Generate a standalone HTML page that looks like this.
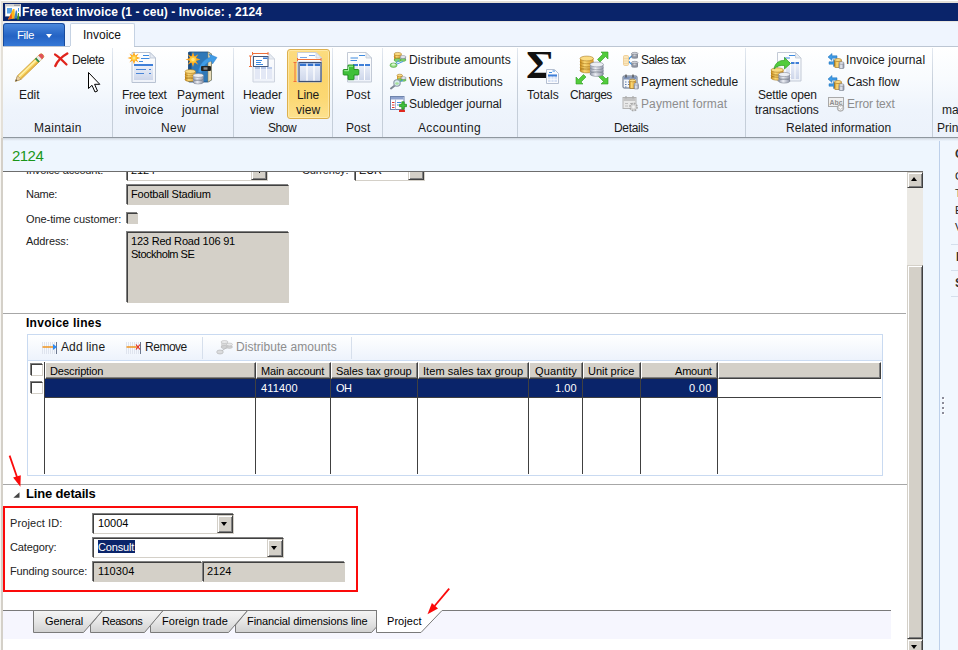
<!DOCTYPE html>
<html><head><meta charset="utf-8"><title>Free text invoice</title>
<style>
*{box-sizing:border-box;margin:0;padding:0}
html,body{width:958px;height:650px;overflow:hidden;background:#fff}
body{position:relative;font-family:"Liberation Sans",sans-serif;font-size:11px;color:#000}
.abs{position:absolute}
.t{position:absolute;white-space:nowrap;line-height:14px}
.rb{font-size:12px;color:#111;letter-spacing:0}
.ctr{text-align:center}
.fm{font-size:11px;letter-spacing:-0.15px;color:#222}
.sunk{position:absolute;background:#d4d0c8;border:1px solid;border-color:#404040 #d4d0c8 #d4d0c8 #404040;box-shadow:-1px -1px 0 #808080}
.gl{width:1px;background:#404040}
.cb{width:13px;height:13px;background:#fff;border:1px solid;border-color:#404040 #d4d0c8 #d4d0c8 #404040;box-shadow:-1px -1px 0 #808080}
.ddb{width:16px;height:18px;background:#d4d0c8;border:1px solid;border-color:#d4d0c8 #404040 #404040 #d4d0c8;box-shadow:inset 1px 1px 0 #fff,inset -1px -1px 0 #808080}
.ddb:after{content:"";position:absolute;left:3px;top:6px;border:3.500px solid transparent;border-bottom:0;border-top:4px solid #000}
.rais{background:#d4d0c8;border:1px solid;border-color:#d4d0c8 #404040 #404040 #d4d0c8;box-shadow:inset 1px 1px 0 #fff,inset -1px -1px 0 #808080}
.hc{height:17px;background:#d4d0c8;border:1px solid;border-color:#fff #404040 #404040 #fff;box-shadow:inset -1px -1px 0 #808080}
.sep{position:absolute;top:48px;height:89px;width:1px;background:linear-gradient(#e3e9f1,#c5ced9 40%)}
</style></head><body>
<!-- window frame -->
<div class="abs" style="left:0;top:0;width:958px;height:650px;background:#e4e0d8"></div>
<div class="abs" style="left:0;top:0;width:958px;height:1px;background:#fff"></div>
<!-- title bar -->
<div class="abs" style="left:3px;top:3px;width:955px;height:18px;background:#0a246a"></div>
<svg class="abs" style="left:4px;top:3px" width="18" height="18" viewBox="4 3 18 18"><rect x="5" y="4" width="16" height="12.500" fill="#cfcfcf"/><rect x="6" y="6.500" width="14" height="9.500" fill="#fff"/><path d="M14.500 5.200 h1 M16.500 5.200 h1 M18.500 5.200 h1" stroke="#555" stroke-width="1"/><rect x="7" y="8" width="5" height="5.500" fill="#5aa4e6"/><rect x="18" y="8" width="1" height="3.500" fill="#4a90e2"/><path d="M8 19.500 L13 9 L14.500 9 L15 18.500 Z" fill="#f9b91a"/><path d="M8 19.500 L11.500 13 L12 18.500 Z" fill="#f0541a"/><path d="M14.200 18.500 L15.800 10.500 L17 10.500 L17.500 18.500 Z" fill="#3a80c4"/><path d="M17 19.500 L18 13 L19 13 L19.200 19.500 Z" fill="#4a9a1a"/></svg>
<div class="t" id="title" style="left:22px;top:5px;font-weight:bold;font-size:12px;color:#fff;line-height:15px;letter-spacing:.07px">Free text invoice (1 - ceu) - Invoice: , 2124</div>
<!-- tab row -->
<div class="abs" style="left:3px;top:21px;width:955px;height:26px;background:#eff5fe;border-top:1px solid #e9e6df"></div>
<div class="abs" style="left:3px;top:23px;width:62px;height:23px;background:linear-gradient(#4a88dc,#2a69c8 45%,#2563c4 55%,#3578d6);border:1px solid #174a9c;border-bottom:none;border-radius:3px 3px 0 0"></div>
<div class="t" style="left:17px;top:28px;font-size:11.500px;letter-spacing:-.4px;color:#fff">File</div>
<div class="abs" style="left:46px;top:34px;width:0;height:0;border-left:3.500px solid transparent;border-right:3.500px solid transparent;border-top:4px solid #fff"></div>
<div class="abs" style="left:70px;top:23px;width:65px;height:24px;background:#fff;border:1px solid #c5d2e3;border-bottom:none;border-radius:2px 2px 0 0"></div>
<div class="t" style="left:83px;top:28px;font-size:12px;color:#111">Invoice</div>
<!-- ribbon -->
<div class="abs" style="left:3px;top:46px;width:955px;height:92px;background:linear-gradient(#ffffff 0%,#f8fbfe 35%,#eef4fc 70%,#ecf2fb 100%);border-top:1px solid #bcc6d3;border-bottom:1px solid #8f979f"></div>
<div class="abs" style="left:70px;top:46px;width:64px;height:1px;background:#fff"></div>
<div id="ribbon">
<div class="sep" style="left:112px"></div><div class="sep" style="left:233px"></div><div class="sep" style="left:332px"></div><div class="sep" style="left:382px"></div><div class="sep" style="left:517px"></div><div class="sep" style="left:745px"></div><div class="sep" style="left:932px"></div>
<div class="abs" style="left:287px;top:49px;width:43px;height:70px;border:1px solid #ddb04e;border-radius:3px;background:linear-gradient(#fcdc80 0%,#fbd56c 40%,#fcd873 70%,#fde18e 100%);box-shadow:inset 0 0 0 1px rgba(255,240,190,.6)"></div>
<svg class="abs" style="left:0;top:46px;z-index:1" width="958" height="92" viewBox="0 46 958 92" id="ricons">
<defs>
<linearGradient id="gold" x1="0" x2="1"><stop offset="0" stop-color="#c98a1a"/><stop offset=".35" stop-color="#fbd976"/><stop offset="1" stop-color="#d6962a"/></linearGradient>
<linearGradient id="silv" x1="0" x2="1"><stop offset="0" stop-color="#8f96a8"/><stop offset=".4" stop-color="#eceef4"/><stop offset="1" stop-color="#8d93a6"/></linearGradient>
<linearGradient id="docg" x1="0" y1="0" x2="0" y2="1"><stop offset="0" stop-color="#ffffff"/><stop offset="1" stop-color="#eef2f9"/></linearGradient>
<linearGradient id="tblg" x1="0" y1="0" x2="0" y2="1"><stop offset="0" stop-color="#eef2fb"/><stop offset="1" stop-color="#cdd6ea"/></linearGradient>
<g id="star"><path d="M0 -6.500 L1.300 -2.600 L4.600 -4.600 L2.600 -1.300 L6.500 0 L2.600 1.300 L4.600 4.600 L1.300 2.600 L0 6.500 L-1.300 2.600 L-4.600 4.600 L-2.600 1.300 L-6.500 0 L-2.600 -1.300 L-4.600 -4.600 L-1.300 -2.600 Z" fill="#ffa51a"/><circle r="2.800" fill="#ffc93a"/><circle r="1.500" fill="#ffe680"/></g>
<g id="swap"><path d="M0 3.500 L4 0 V2.300 H9 V4.700 H4 V7 Z" fill="#3f9be6" stroke="#1f6fb5" stroke-width=".5"/><path d="M9.500 9.500 L5.500 6 V8.300 H1 V10.700 H5.500 V13 Z" fill="#3f9be6" stroke="#1f6fb5" stroke-width=".5"/><rect x="6.500" y="6.500" width="7" height="7.500" rx="1" fill="url(#gold)" stroke="#9a6a14" stroke-width=".6"/><ellipse cx="10" cy="6.500" rx="3.500" ry="1.500" fill="#fbdc84" stroke="#9a6a14" stroke-width=".6"/><rect x="11" y="9.500" width="5" height="5.500" rx="1" fill="url(#silv)" stroke="#6f7785" stroke-width=".6"/><ellipse cx="13.500" cy="9.500" rx="2.500" ry="1.200" fill="#eceef4" stroke="#6f7785" stroke-width=".6"/></g>
</defs>
<!-- pencil -->
<g transform="translate(15.400 81.300) rotate(-44)"><path d="M0 0 L5.500 -2.500 H36 Q38.300 -2.500 38.300 0 Q38.300 2.500 36 2.500 H5.500 Z" fill="#f9da6c" stroke="#c9962e" stroke-width=".8"/><path d="M5.500 -0.800 H30" stroke="#fff3b5" stroke-width="1.300"/><path d="M5.500 1.600 H30" stroke="#e4b040" stroke-width="1"/><path d="M0 0 L5.500 -2.500 V2.500 Z" fill="#ecd2a2" stroke="#a38a5e" stroke-width=".5"/><path d="M0 0 L2 -0.900 V0.900 Z" fill="#444"/><rect x="29.500" y="-2.500" width="2" height="5" fill="#2e8f4e"/><rect x="31.500" y="-2.500" width="3" height="5" fill="#e8e8ea"/><path d="M34.500 -2.500 H36 Q38.300 -2.500 38.300 0 Q38.300 2.500 36 2.500 H34.500 Z" fill="#e0525a"/></g>
<!-- delete X -->
<path d="M55 54.500 C58 56 62 60 66.500 64.500" stroke="#e0241c" stroke-width="2.200" fill="none" stroke-linecap="round"/><path d="M67.300 53.500 C62 56.500 57.500 60.500 55.300 66" stroke="#e0241c" stroke-width="2.400" fill="none" stroke-linecap="round"/>
<!-- cursor -->
<path d="M88.500 72.500 V88.500 L92 85.300 L95 92 L97.500 91 L94.600 84.300 H99.800 Z" fill="#fff" stroke="#000" stroke-width="1" stroke-linejoin="miter"/>
<!-- free text invoice -->
<path d="M132 52.500 H150 L155.500 58 V82.500 H132 Z" fill="url(#docg)" stroke="#b9c3d3" stroke-width="1"/><path d="M150 52.500 V58 H155.500 Z" fill="#e6ebf3" stroke="#b9c3d3" stroke-width=".8"/>
<path d="M143 55.500 H149 M141 58.500 H149.500 M139 61.500 H143" stroke="#3f8be0" stroke-width="1.200"/>
<rect x="134" y="64" width="19" height="16" fill="url(#tblg)"/><rect x="134" y="64" width="19" height="2" fill="#3f7fd8"/><path d="M136 69.500 H146 M149 69.500 H151 M136 73.500 H144 M149 73.500 H151" stroke="#4a86d8" stroke-width="1"/>
<use href="#star" x="134" y="58"/>
<!-- payment journal -->
<path d="M188.500 53 Q188.500 52 189.500 52 H208 L211.500 54 V80 L208 82 H189.500 Q188.500 82 188.500 81 Z" fill="#2f78b8" stroke="#1c4f80" stroke-width=".8"/><path d="M208 52 L211.500 54 V80 L208 82 Z" fill="#e8dcb8" stroke="#8a7a4a" stroke-width=".5"/><rect x="188.500" y="52" width="3" height="30" fill="#1d4f82"/>
<path d="M198 72 C200 62 206 58 210.500 57.500 L209 54 L217 57.500 L212.500 64 L211.500 61 C207 62 203 66 201.500 73 Z" fill="#3f9be6" stroke="#2a7ac8" stroke-width=".5"/>
<rect x="201" y="66" width="10" height="5" rx="1" fill="#222"/><rect x="203.500" y="67.300" width="4" height="2.400" fill="#888"/>
<g><rect x="185" y="71.500" width="10.500" height="8" fill="url(#gold)"/><ellipse cx="190.250" cy="79.500" rx="5.250" ry="2" fill="url(#gold)" stroke="#9a6a14" stroke-width=".5"/><path d="M185 74c0 2.500 10.500 2.500 10.500 0M185 76.700c0 2.500 10.500 2.500 10.500 0" stroke="#9a6a14" stroke-width=".5" fill="none"/><ellipse cx="190.250" cy="71.500" rx="5.250" ry="2" fill="#fbdc84" stroke="#9a6a14" stroke-width=".5"/></g>
<g><rect x="193" y="75.500" width="10.500" height="6.500" fill="url(#silv)"/><ellipse cx="198.250" cy="82" rx="5.250" ry="2" fill="url(#silv)" stroke="#6f7785" stroke-width=".5"/><path d="M193 78.500c0 2.500 10.500 2.500 10.500 0" stroke="#6f7785" stroke-width=".5" fill="none"/><ellipse cx="198.250" cy="75.500" rx="5.250" ry="2" fill="#eceef4" stroke="#6f7785" stroke-width=".5"/></g>
<g transform="translate(193 59.500) scale(1.150)"><use href="#star"/></g>
<!-- header view -->
<path d="M253 53.500 H269 L274.500 59 V82 H253 Z" fill="url(#docg)" stroke="#cdd3de" stroke-width="1"/><path d="M269 53.500 V59 H274.500 Z" fill="#e9edf4" stroke="#cdd3de" stroke-width=".8"/>
<rect x="255" y="67" width="17" height="12" fill="#e3e8f5"/><rect x="255" y="67" width="17" height="2" fill="#b7c9ea"/><path d="M260.500 67 V79 M266.500 67 V79" stroke="#fff" stroke-width="1"/>
<rect x="253.500" y="56.500" width="14.500" height="10" fill="#fff" stroke="#44597c" stroke-width="1"/><rect x="263" y="57.500" width="4.500" height="1.500" fill="#3f7fd8"/><path d="M256 60.500 H262 M256 62.500 H261 M256 64.500 H263" stroke="#3f8be0" stroke-width="1"/>
<path d="M252.500 53.500 H268 M252.500 52 V55 M268 52 V55 M250.500 56 V66.500 M249 56 H252 M249 66.500 H252" stroke="#f0703a" stroke-width="1" fill="none"/>
<!-- line view -->
<path d="M297.500 52.500 H316 L321.500 58 V82 H297.500 Z" fill="url(#docg)" stroke="#c9ced8" stroke-width="1"/><path d="M316 52.500 V58 H321.500 Z" fill="#e9edf4" stroke="#c9ced8" stroke-width=".8"/>
<path d="M309 55.500 H315 M300 57.500 H307" stroke="#7aa7e6" stroke-width="1"/>
<rect x="299" y="62.500" width="22" height="19" fill="url(#tblg)" stroke="#3c4f74" stroke-width="1.200"/><rect x="300" y="63.500" width="20" height="2.500" fill="#3473d0"/><path d="M307 63.500 V80.500 M314 63.500 V80.500" stroke="#fff" stroke-width="1.300"/>
<path d="M297.500 59.500 H321 M297.500 58 V61 M321 58 V61 M295 62.500 V81.500 M293.500 62.500 H296.500 M293.500 81.500 H296.500" stroke="#f0703a" stroke-width="1" fill="none"/>
<!-- post -->
<path d="M347.500 52.500 H366 L371.500 58 V82 H347.500 Z" fill="url(#docg)" stroke="#c3cad6" stroke-width="1"/><path d="M366 52.500 V58 H371.500 Z" fill="#e6ebf3" stroke="#c3cad6" stroke-width=".8"/>
<path d="M359 55.500 H365 M350.500 58 H358 M350.500 60.500 H357" stroke="#3f8be0" stroke-width="1.200"/>
<rect x="353" y="64" width="17" height="16" fill="url(#tblg)"/><rect x="353" y="64" width="17" height="2" fill="#3f7fd8"/><path d="M358.500 64 V80 M364.500 64 V80" stroke="#fff" stroke-width="1"/>
<path d="M348.500 65 H353.500 Q354 65 354 65.500 V69.500 H358 Q358.800 69.500 358.800 70.200 V74.300 Q358.800 75 358 75 H354 V79 Q354 79.700 353.500 79.700 H348.500 Q348 79.700 348 79 V75 H344 Q343.200 75 343.200 74.300 V70.200 Q343.200 69.500 344 69.500 H348 V65.500 Q348 65 348.500 65 Z" fill="#3fc03a" stroke="#1d8a1a" stroke-width=".9"/><path d="M349 66.200 H353 M344.300 70.700 H348.500 V66.500" stroke="#a5eea0" stroke-width="1" fill="none"/>
<!-- distribute amounts -->
<g id="dist"><rect x="394" y="54" width="7.500" height="6" fill="url(#gold)"/><ellipse cx="397.750" cy="60" rx="3.750" ry="1.600" fill="#7fd070" stroke="#3a9a2a" stroke-width=".5"/><path d="M394 56.500c0 2 7.500 2 7.500 0" stroke="#9a6a14" stroke-width=".5" fill="none"/><ellipse cx="397.750" cy="54" rx="3.750" ry="1.600" fill="#fbdc84" stroke="#9a6a14" stroke-width=".5"/>
<rect x="400" y="57" width="6" height="3" fill="url(#silv)"/><ellipse cx="403" cy="60" rx="3" ry="1.400" fill="#7fd070" stroke="#3a9a2a" stroke-width=".5"/><ellipse cx="403" cy="57" rx="3" ry="1.400" fill="#eceef4" stroke="#6f7785" stroke-width=".5"/>
<path d="M393.500 65 L399 60.500 M393.500 65.500 L403 61.500" stroke="#4a9ae6" stroke-width="1"/><ellipse cx="393.500" cy="65.200" rx="3.500" ry="2.200" fill="#9be08a" stroke="#3a9a2a" stroke-width=".6"/><ellipse cx="393.500" cy="64.600" rx="2" ry="1" fill="#dff5d8"/></g>
<!-- view distributions -->
<rect x="397" y="75.500" width="5.500" height="4.500" fill="url(#gold)"/><ellipse cx="399.750" cy="80" rx="2.750" ry="1.300" fill="#7fd070" stroke="#3a9a2a" stroke-width=".5"/><ellipse cx="399.750" cy="75.500" rx="2.750" ry="1.300" fill="#fbdc84" stroke="#9a6a14" stroke-width=".5"/>
<ellipse cx="403.500" cy="80" rx="2.600" ry="1.300" fill="#7fd070" stroke="#3a9a2a" stroke-width=".5"/><ellipse cx="403.500" cy="78" rx="2.600" ry="1.300" fill="#eceef4" stroke="#6f7785" stroke-width=".5"/>
<path d="M399 82 L403 80.500" stroke="#4a9ae6" stroke-width="1"/>
<path d="M394.800 85.500 L391 88.500" stroke="#7d8794" stroke-width="2" stroke-linecap="round"/><circle cx="397" cy="83" r="3.200" fill="#d5ecf2" stroke="#8e98a6" stroke-width="1.100"/><ellipse cx="397" cy="83.500" rx="1.800" ry="1.200" fill="#a8e09a"/>
<!-- subledger journal -->
<rect x="390.500" y="96.500" width="13.500" height="13" fill="#fff" stroke="#6f84ac" stroke-width="1"/><rect x="391" y="97" width="12.500" height="2.500" fill="#8fa3cf"/><path d="M395.500 99.500 V109.500" stroke="#aab9d8" stroke-width="1"/><path d="M392 102.500 H394.500 M392 105 H394.500 M392 107.500 H394.500" stroke="#e0382e" stroke-width="1"/><path d="M397 102.500 H401 M397 105 H399" stroke="#3f8be0" stroke-width="1"/>
<path d="M401.800 101.800 H404.200 V104.300 H406.500 V106.700 H404.200 V109.200 H401.800 V106.700 H399.500 V104.300 H401.800 Z" fill="#3fc03a" stroke="#1d8a1a" stroke-width=".7"/>
<rect x="399" y="109.700" width="6" height="2.200" rx=".5" fill="#e0281e"/>
<!-- totals small doc -->
<path d="M546.500 69.500 H554.500 L558.500 73.500 V83.500 H546.500 Z" fill="#fbfcfe" stroke="#b5bfd0" stroke-width="1"/><rect x="548" y="74.500" width="9" height="7.500" fill="#d5e0f4"/><rect x="548" y="74.500" width="9" height="2" fill="#3f7fd8"/><path d="M551 76.500 V82 M554 76.500 V82 M548 79.300 H557" stroke="#fff" stroke-width=".8"/><path d="M549 72.500 H552 M552.500 71 H555" stroke="#3f8be0" stroke-width="1"/>
<!-- charges -->
<g fill="#52cc3c" stroke="#2f9a22" stroke-width=".6"><path d="M608 52 V59 L605.500 56.500 L600 62 L597.500 59.500 L603 54 L601 52 Z"/><path d="M576 84 V77 L578.500 79.500 L583.500 74.500 L586 77 L581 82 L583 84 Z"/><path d="M608 84 H601 L603.500 81.500 L598.500 76.500 L601 74 L606 79 L608 77 Z"/></g>
<g><rect x="580" y="58.500" width="13.500" height="12" fill="url(#gold)"/><ellipse cx="586.750" cy="70.500" rx="6.750" ry="2.400" fill="url(#gold)" stroke="#9a6a14" stroke-width=".5"/><path d="M580 61.500c0 3 13.500 3 13.500 0M580 64.500c0 3 13.500 3 13.500 0M580 67.500c0 3 13.500 3 13.500 0" stroke="#9a6a14" stroke-width=".5" fill="none"/><ellipse cx="586.750" cy="58.500" rx="6.750" ry="2.400" fill="#fbdc84" stroke="#9a6a14" stroke-width=".5"/></g>
<g><rect x="590" y="64.500" width="13.500" height="9.500" fill="url(#silv)"/><ellipse cx="596.750" cy="74" rx="6.750" ry="2.400" fill="url(#silv)" stroke="#6f7785" stroke-width=".5"/><path d="M590 67.500c0 3 13.500 3 13.500 0M590 70.500c0 3 13.500 3 13.500 0" stroke="#6f7785" stroke-width=".5" fill="none"/><ellipse cx="596.750" cy="64.500" rx="6.750" ry="2.400" fill="#eceef4" stroke="#6f7785" stroke-width=".5"/></g>
<!-- sales tax -->
<path d="M628.500 59 L632 55.800 M628.500 61.500 L632 64.700" stroke="#2f8fe8" stroke-width="1.100" fill="none"/><circle cx="629" cy="58.700" r=".9" fill="#2f8fe8"/><circle cx="629" cy="61.800" r=".9" fill="#2f8fe8"/>
<rect x="623.500" y="55.500" width="5" height="10" rx="1.200" fill="#fae6bc" stroke="#ecc88a" stroke-width=".8"/><path d="M623.500 58.500h5M623.500 61h5M623.500 63.500h5" stroke="#ecc88a" stroke-width=".5"/>
<linearGradient id="dsil" x1="0" x2="1"><stop offset="0" stop-color="#6d727e"/><stop offset=".45" stop-color="#d9dce2"/><stop offset="1" stop-color="#777c88"/></linearGradient>
<rect x="631.500" y="53.500" width="6.500" height="4" fill="url(#dsil)"/><ellipse cx="634.750" cy="57.500" rx="3.250" ry="1.200" fill="#8d929e"/><ellipse cx="634.750" cy="53.500" rx="3.250" ry="1.200" fill="#c9ccd4" stroke="#70757f" stroke-width=".5"/>
<rect x="631.500" y="62.500" width="6.500" height="4" fill="url(#dsil)"/><ellipse cx="634.750" cy="66.500" rx="3.250" ry="1.200" fill="#8d929e"/><ellipse cx="634.750" cy="62.500" rx="3.250" ry="1.200" fill="#c9ccd4" stroke="#70757f" stroke-width=".5"/>
<!-- payment schedule -->
<rect x="623" y="76" width="14" height="12" rx="1" fill="#f4f6fa" stroke="#5f6b80" stroke-width="1"/><rect x="623.500" y="76.500" width="13" height="3" fill="#7f93b8"/><path d="M626 74.500 V77.500 M633 74.500 V77.500" stroke="#444" stroke-width="1.200"/><path d="M625 82 h1.500 M628 82 h1.500 M625 84.500 h1.500 M628 84.500 h1.500 M625 87 h1.500" stroke="#5f7fb0" stroke-width="1.200"/>
<path d="M628 79 L631 76.500 V78 H634 V80 H631 V81.500 Z" fill="#9aa3b5"/>
<rect x="629.500" y="80.500" width="6" height="8" rx="1" fill="url(#gold)" stroke="#9a6a14" stroke-width=".6"/><ellipse cx="632.500" cy="80.500" rx="3" ry="1.300" fill="#fbdc84" stroke="#9a6a14" stroke-width=".5"/>
<rect x="634" y="84" width="4.500" height="5" rx="1" fill="url(#silv)" stroke="#6f7785" stroke-width=".5"/><ellipse cx="636.250" cy="84" rx="2.250" ry="1" fill="#eceef4" stroke="#6f7785" stroke-width=".5"/>
<!-- payment format (disabled) -->
<rect x="623" y="97.500" width="13" height="11" fill="#e9e9e9" stroke="#b3b3b3" stroke-width="1"/><rect x="623.500" y="98" width="12" height="3" fill="#c4c4c4"/><path d="M625 103.500 h3 M630 103.500 h3 M625 106 h3" stroke="#bdbdbd" stroke-width="1.200"/><path d="M626 96 V98.500 M633 96 V98.500" stroke="#aaa" stroke-width="1.200"/>
<circle cx="633.500" cy="107" r="3.600" fill="#d6d6d6" stroke="#a8a8a8" stroke-width="1.600" stroke-dasharray="1.700 1.100"/><circle cx="633.500" cy="107" r="1.400" fill="#f4f4f4"/>
<!-- settle open transactions -->
<path d="M777.500 52.500 H795.500 L801 58 V81 H777.500 Z" fill="url(#docg)" stroke="#c3cad6" stroke-width="1"/><path d="M795.500 52.500 V58 H801 Z" fill="#e6ebf3" stroke="#c3cad6" stroke-width=".8"/>
<path d="M789 55.500 H795 M784 58 H790" stroke="#3f8be0" stroke-width="1.200"/>
<rect x="786" y="62" width="13" height="17" fill="url(#tblg)"/><rect x="786" y="62" width="13" height="2" fill="#3f7fd8"/><path d="M790.500 62 V79 M795 62 V79" stroke="#fff" stroke-width="1"/>
<g><rect x="771" y="70" width="12.500" height="8" fill="url(#gold)"/><ellipse cx="777.250" cy="78" rx="6.250" ry="2.200" fill="url(#gold)" stroke="#9a6a14" stroke-width=".5"/><path d="M771 72.700c0 2.800 12.500 2.800 12.500 0M771 75.300c0 2.800 12.500 2.800 12.500 0" stroke="#9a6a14" stroke-width=".5" fill="none"/><ellipse cx="777.250" cy="70" rx="6.250" ry="2.200" fill="#fbdc84" stroke="#9a6a14" stroke-width=".5"/></g>
<g><rect x="778.500" y="74.500" width="11.500" height="6.500" fill="url(#silv)"/><ellipse cx="784.250" cy="81" rx="5.750" ry="2.100" fill="url(#silv)" stroke="#6f7785" stroke-width=".5"/><path d="M778.500 77.500c0 2.600 11.500 2.600 11.500 0" stroke="#6f7785" stroke-width=".5" fill="none"/><ellipse cx="784.250" cy="74.500" rx="5.750" ry="2.100" fill="#eceef4" stroke="#6f7785" stroke-width=".5"/></g>
<path d="M774 69 C775 62.500 780 60 784.500 60.500 L784.500 57.500 L790.500 63.500 L784.500 69 L784.500 65.500 C780.500 65 777 66 774 69 Z" fill="#52cc3c" stroke="#2f9a22" stroke-width=".7"/>
<!-- invoice journal / cash flow -->
<use href="#swap" x="828" y="53.500"/><use href="#swap" x="828" y="75.500"/>
<!-- error text -->
<rect x="828.500" y="97.500" width="15" height="9" fill="#f0f0f0" stroke="#a9a9a9" stroke-width="1"/><text x="829.500" y="105" font-family="Liberation Sans, sans-serif" font-size="7.500" font-weight="bold" fill="#8f8f8f" textLength="13" lengthAdjust="spacingAndGlyphs">Abc</text><circle cx="840.500" cy="108" r="3.300" fill="#cdcdcd" stroke="#9a9a9a" stroke-width=".7"/><path d="M839 106.500 L842 109.500 M842 106.500 L839 109.500" stroke="#fff" stroke-width="1.100"/>
</svg>
<div class="t" id="sigma" style="left:526px;top:43px;font-family:'Liberation Serif',serif;font-weight:bold;font-size:40px;line-height:44px;color:#111;transform:scaleX(1.1);transform-origin:0 0">Σ</div>
<!-- RTEXT -->
<div class="t" style="left:19px;top:88px;font-size:12px;color:#1a1a1a;letter-spacing:-0.06px;">Edit</div>
<div class="t" style="left:72px;top:53px;font-size:12px;color:#1a1a1a;letter-spacing:-0.42px;">Delete</div>
<div class="t" style="left:34px;top:121px;font-size:12px;color:#1a1a1a;letter-spacing:0.28px;">Maintain</div>
<div class="t" style="left:122px;top:88px;font-size:12px;color:#1a1a1a;letter-spacing:-0.32px;">Free text</div>
<div class="t" style="left:125px;top:103px;font-size:12px;color:#1a1a1a;letter-spacing:0.16px;">invoice</div>
<div class="t" style="left:177px;top:88px;font-size:12px;color:#1a1a1a;">Payment</div>
<div class="t" style="left:182px;top:103px;font-size:12px;color:#1a1a1a;letter-spacing:0.13px;">journal</div>
<div class="t" style="left:161px;top:121px;font-size:12px;color:#1a1a1a;letter-spacing:0.39px;">New</div>
<div class="t" style="left:243px;top:88px;font-size:12px;color:#1a1a1a;letter-spacing:-0.07px;">Header</div>
<div class="t" style="left:250px;top:103px;font-size:12px;color:#1a1a1a;letter-spacing:0.09px;">view</div>
<div class="t" style="left:297px;top:88px;font-size:12px;color:#1a1a1a;letter-spacing:-0.13px;">Line</div>
<div class="t" style="left:296px;top:103px;font-size:12px;color:#1a1a1a;letter-spacing:0.09px;">view</div>
<div class="t" style="left:268px;top:121px;font-size:12px;color:#1a1a1a;letter-spacing:-0.48px;">Show</div>
<div class="t" style="left:346px;top:88px;font-size:12px;color:#1a1a1a;letter-spacing:0.09px;">Post</div>
<div class="t" style="left:346px;top:121px;font-size:12px;color:#1a1a1a;letter-spacing:0.09px;">Post</div>
<div class="t" style="left:409px;top:53px;font-size:12px;color:#1a1a1a;letter-spacing:0.10px;">Distribute amounts</div>
<div class="t" style="left:409px;top:75px;font-size:12px;color:#1a1a1a;letter-spacing:0.04px;">View distributions</div>
<div class="t" style="left:409px;top:97px;font-size:12px;color:#1a1a1a;letter-spacing:-0.08px;">Subledger journal</div>
<div class="t" style="left:418px;top:121px;font-size:12px;color:#1a1a1a;letter-spacing:0.36px;">Accounting</div>
<div class="t" style="left:527px;top:88px;font-size:12px;color:#1a1a1a;letter-spacing:0.09px;">Totals</div>
<div class="t" style="left:570px;top:88px;font-size:12px;color:#1a1a1a;letter-spacing:-0.51px;">Charges</div>
<div class="t" style="left:641px;top:53px;font-size:12px;color:#1a1a1a;letter-spacing:-0.54px;">Sales tax</div>
<div class="t" style="left:641px;top:75px;font-size:12px;color:#1a1a1a;letter-spacing:-0.11px;">Payment schedule</div>
<div class="t" style="left:641px;top:97px;font-size:12px;color:#8d8d8d;letter-spacing:0.10px;">Payment format</div>
<div class="t" style="left:614px;top:121px;font-size:12px;color:#1a1a1a;letter-spacing:-0.31px;">Details</div>
<div class="t" style="left:758px;top:88px;font-size:12px;color:#1a1a1a;letter-spacing:-0.19px;">Settle open</div>
<div class="t" style="left:755px;top:103px;font-size:12px;color:#1a1a1a;letter-spacing:-0.08px;">transactions</div>
<div class="t" style="left:846px;top:53px;font-size:12px;color:#1a1a1a;letter-spacing:0.12px;">Invoice journal</div>
<div class="t" style="left:847px;top:75px;font-size:12px;color:#1a1a1a;">Cash flow</div>
<div class="t" style="left:847px;top:97px;font-size:12px;color:#8d8d8d;letter-spacing:-0.18px;">Error text</div>
<div class="t" style="left:786px;top:121px;font-size:12px;color:#1a1a1a;letter-spacing:0.06px;">Related information</div>
<div class="t" style="left:942px;top:103px;font-size:12px;color:#1a1a1a;">ma</div>
<div class="t" style="left:937px;top:121px;font-size:12px;color:#1a1a1a;">Prin</div>
<!-- /RTEXT -->
<!-- Maintain -->
<!-- cursor -->
<!-- New -->
<!-- Show -->
<!-- Post -->
<!-- Accounting -->
<!-- Details -->
<!-- Related information -->
</div>

<!-- caption -->
<div class="abs" style="left:3px;top:138px;width:955px;height:33px;background:#eef6fe"></div>
<div class="t" id="cap" style="left:12px;top:147px;font-size:15px;color:#1a961a;line-height:18px;letter-spacing:-.55px">2124</div>
<div id="form">
<!-- white form area -->
<div class="abs" style="left:3px;top:171px;width:920px;height:479px;background:#fff;border-top:1px solid #6d6d6d"></div>
<!-- right strip + panel -->
<div class="abs" style="left:923px;top:138px;width:35px;height:512px;background:#eef6fe"></div>
<div class="abs" style="left:939px;top:138px;width:1px;height:512px;background:#bdd0ea"></div>
<div class="abs" style="left:940px;top:138px;width:18px;height:512px;background:#f1f7fe"></div>
<div class="abs" style="left:951px;top:244px;width:7px;height:1px;background:#d5dfec"></div>
<div class="abs" style="left:951px;top:270px;width:7px;height:1px;background:#d5dfec"></div>
<div class="abs" style="left:951px;top:296px;width:7px;height:1px;background:#d5dfec"></div>
<div class="t" style="left:955px;top:147px;font-weight:bold;font-size:12px;color:#333">C</div>
<div class="t fm" style="left:955px;top:169px">C</div>
<div class="t fm" style="left:955px;top:186px">T</div>
<div class="t fm" style="left:955px;top:203px">E</div>
<div class="t fm" style="left:955px;top:220px">V</div>
<div class="t" style="left:956px;top:250px;font-weight:bold;font-size:12px;color:#333">I</div>
<div class="t" style="left:955px;top:276px;font-weight:bold;font-size:12px;color:#333">S</div>
<div class="abs" style="left:942px;top:397px;width:2px;height:2px;background:#8b8b99;box-shadow:1px 1px 0 #fff"></div><div class="abs" style="left:942px;top:402px;width:2px;height:2px;background:#8b8b99;box-shadow:1px 1px 0 #fff"></div><div class="abs" style="left:942px;top:407px;width:2px;height:2px;background:#8b8b99;box-shadow:1px 1px 0 #fff"></div><div class="abs" style="left:942px;top:412px;width:2px;height:2px;background:#8b8b99;box-shadow:1px 1px 0 #fff"></div>
<!-- scrollbar -->
<div class="abs" style="left:907px;top:172px;width:16px;height:478px;background:#ebe9e4"></div>
<div class="abs rais" style="left:907px;top:172px;width:16px;height:16px"></div>
<div class="abs" style="left:911px;top:177px;width:0;height:0;border:3.500px solid transparent;border-top:0;border-bottom:4px solid #000"></div>
<div class="abs rais" style="left:907px;top:265px;width:16px;height:374px"></div>
<div class="abs rais" style="left:907px;top:639px;width:16px;height:16px"></div>
<div class="abs" style="left:911px;top:645px;width:0;height:0;border:3.500px solid transparent;border-bottom:0;border-top:4px solid #000"></div>
<!-- header fields (clipped top row) -->
<div class="abs" style="left:3px;top:172px;width:903px;height:12px;overflow:hidden">
 <div class="t fm" style="left:23px;top:-9px">Invoice account:</div>
 <div class="sunk" style="left:124px;top:-11px;width:141px;height:20px;background:#fff"></div>
 <div class="t fm" style="left:128px;top:-9px;color:#000">2124</div>
 <div class="abs rais" style="left:248px;top:-9px;width:16px;height:17px"></div>
 <div class="abs" style="left:256px;top:0;width:1px;height:1px;background:#000"></div><div class="abs" style="left:413px;top:0;width:1px;height:1px;background:#000"></div>
 <div class="t fm" style="left:299px;top:-9px">Currency:</div>
 <div class="sunk" style="left:352px;top:-11px;width:70px;height:20px;background:#fff"></div>
 <div class="t fm" style="left:356px;top:-9px;color:#000">EUR</div>
 <div class="abs rais" style="left:405px;top:-9px;width:16px;height:17px"></div>
</div>
<div class="sunk" style="left:127px;top:185px;width:162px;height:20px"></div>
<div class="sunk" style="left:127px;top:213px;width:11px;height:11px"></div>
<div class="sunk" style="left:127px;top:232px;width:162px;height:71px"></div>
<!-- invoice lines -->
<div class="abs" style="left:3px;top:313px;width:903px;height:1px;background:#a7a7a7"></div>
<div class="abs" style="left:27px;top:334px;width:856px;height:142px;border:1px solid #c9daf1;background:#fff"></div>
<div class="abs" style="left:28px;top:335px;width:854px;height:25px;background:linear-gradient(#fff,#edf3fc)"></div>
<div class="abs" style="left:28px;top:360px;width:854px;height:1px;background:#cbdcf3"></div>
<div class="abs" style="left:202px;top:337px;width:1px;height:22px;background:#d6dfec"></div>
<div class="abs" style="left:351px;top:337px;width:1px;height:22px;background:#d6dfec"></div>
<svg class="abs" style="left:40px;top:338px" width="200" height="20" viewBox="40 338 200 20">
<path d="M42.500 342 V354 M44.500 342 V354 M46.500 342 V354 M48.500 342 V354 M50.500 342 V354 M52.500 342 V354 M54.500 342 V354" stroke="#dfe4ee" stroke-width="1"/><path d="M42.500 347 H54" stroke="#f09a2a" stroke-width="1.600"/><path d="M56.500 342 V354" stroke="#6c7890" stroke-width="1"/><path d="M53 344 L57 347 L53 350 Z" fill="#2f8af0"/>
<path d="M126.500 342 V354 M128.500 342 V354 M130.500 342 V354 M132.500 342 V354 M134.500 342 V354 M136.500 342 V354 M138.500 342 V354" stroke="#dfe4ee" stroke-width="1"/><path d="M126.500 347 H137" stroke="#f09a2a" stroke-width="1.600"/><path d="M140.500 342 V354" stroke="#6c7890" stroke-width="1"/><path d="M136 344.500 L140 349.500 M140 344.500 L136 349.500" stroke="#e0281e" stroke-width="1.200"/>
<g opacity=".75"><rect x="221" y="342" width="7" height="5" fill="#cfcfcf"/><ellipse cx="224.500" cy="347" rx="3.500" ry="1.500" fill="#c4c4c4" stroke="#9a9a9a" stroke-width=".5"/><ellipse cx="224.500" cy="342" rx="3.500" ry="1.500" fill="#e4e4e4" stroke="#9a9a9a" stroke-width=".5"/><ellipse cx="229.500" cy="347" rx="3" ry="1.400" fill="#c4c4c4" stroke="#9a9a9a" stroke-width=".5"/><ellipse cx="229.500" cy="344.500" rx="3" ry="1.400" fill="#e4e4e4" stroke="#9a9a9a" stroke-width=".5"/><path d="M220 352 L226 348" stroke="#aaa" stroke-width="1"/><ellipse cx="220" cy="352" rx="3.300" ry="2" fill="#d4d4d4" stroke="#9a9a9a" stroke-width=".6"/></g>
</svg>
<!-- grid -->
<div class="abs" style="left:45px;top:362px;width:836px;height:17px;background:#d4d0c8"></div>
<div class="abs hc" style="left:45px;top:362px;width:211px"></div>
<div class="abs hc" style="left:256px;top:362px;width:75px"></div>
<div class="abs hc" style="left:331px;top:362px;width:87px"></div>
<div class="abs hc" style="left:418px;top:362px;width:111px"></div>
<div class="abs hc" style="left:529px;top:362px;width:54px"></div>
<div class="abs hc" style="left:583px;top:362px;width:58px"></div>
<div class="abs hc" style="left:641px;top:362px;width:77px"></div>
<div class="abs hc" style="left:718px;top:362px;width:163px"></div>
<div class="abs" style="left:45px;top:379px;width:673px;height:18px;background:#0a246a"></div>
<div class="abs" style="left:45px;top:397px;width:836px;height:1px;background:#404040"></div>
<div class="abs gl" style="left:44px;top:362px;height:112px"></div>
<div class="abs gl" style="left:255px;top:379px;height:95px"></div>
<div class="abs gl" style="left:330px;top:379px;height:95px"></div>
<div class="abs gl" style="left:417px;top:379px;height:95px"></div>
<div class="abs gl" style="left:528px;top:379px;height:95px"></div>
<div class="abs gl" style="left:582px;top:379px;height:95px"></div>
<div class="abs gl" style="left:640px;top:379px;height:95px"></div>
<div class="abs gl" style="left:717px;top:379px;height:95px"></div>
<div class="abs cb" style="left:31px;top:364px;width:12px;height:12px"></div>
<div class="abs cb" style="left:31px;top:382px;width:12px;height:12px"></div>
<!-- line details -->
<div class="abs" style="left:3px;top:484px;width:904px;height:1px;background:#a7a7a7"></div>
<svg class="abs" style="left:12px;top:490px" width="9" height="9" viewBox="0 0 9 9"><path d="M7.500 2.300 V7.700 H1.300 Z" fill="#444"/></svg>
<div class="abs" style="left:3px;top:506px;width:355px;height:86px;border:2px solid #fb0a0a"></div>
<div class="sunk" style="left:93px;top:514px;width:141px;height:20px;background:#fff"></div>
<div class="abs ddb" style="left:217px;top:515px"></div>
<div class="sunk" style="left:93px;top:538px;width:191px;height:20px;background:#fff"></div>
<div class="abs" style="left:98px;top:540px;width:37px;height:13px;background:#0a246a"></div>
<div class="abs ddb" style="left:267px;top:539px"></div>
<div class="sunk" style="left:93px;top:562px;width:109px;height:20px"></div>
<div class="sunk" style="left:203px;top:562px;width:142px;height:20px"></div>
<!-- tab strip -->
<div class="abs" style="left:3px;top:610px;width:888px;height:29px;background:#f6f6fe"></div>
<svg class="abs" style="left:0;top:605px" width="958" height="40" viewBox="0 605 958 40">
<defs><linearGradient id="tg" x1="0" y1="0" x2="0" y2="1"><stop offset="0" stop-color="#f4f4f4"/><stop offset=".5" stop-color="#e6e6e6"/><stop offset="1" stop-color="#d0d0d0"/></linearGradient></defs>
<path d="M3 610.500 H376.500 M442 610.500 H891" stroke="#7a7a7a" fill="none"/>
<path d="M235.500 632.500 V625 L247.500 610.500 H376.500 V627 L371.500 632.500 Z" fill="url(#tg)" stroke="#7a7a7a"/>
<path d="M150.500 632.500 V625 L163 610.500 H247.500 L228.500 632.500 Z" fill="url(#tg)" stroke="#7a7a7a"/>
<path d="M90.500 632.500 V625 L102.500 610.500 H163 L144.500 632.500 Z" fill="url(#tg)" stroke="#7a7a7a"/>
<path d="M33.500 632.500 V610.500 H102.500 L83.500 632.500 Z" fill="url(#tg)" stroke="#7a7a7a"/>
<path d="M376.500 610 V632.500 H421 L442.500 610" fill="#fff" stroke="#7a7a7a"/>
<path d="M377 610.500 H441.500" stroke="#fff"/>
</svg>
<!-- FTEXT -->
<div class="t" style="left:26px;top:187px;font-size:11px;color:#222;letter-spacing:-0.28px;">Name:</div>
<div class="t" style="left:131px;top:187px;font-size:11px;color:#000;letter-spacing:-0.18px;">Football Stadium</div>
<div class="t" style="left:26px;top:212px;font-size:11px;color:#222;letter-spacing:-0.08px;">One-time customer:</div>
<div class="t" style="left:26px;top:234px;font-size:11px;color:#222;letter-spacing:-0.09px;">Address:</div>
<div class="t" style="left:131px;top:234px;font-size:11px;color:#000;letter-spacing:-0.19px;">123 Red Road 106 91</div>
<div class="t" style="left:131px;top:247px;font-size:11px;color:#000;letter-spacing:-0.48px;">Stockholm SE</div>
<div class="t" style="left:26px;top:316px;font-size:12px;color:#000;letter-spacing:0.28px;font-weight:bold;">Invoice lines</div>
<div class="t" style="left:61px;top:340px;font-size:12px;color:#1a1a1a;letter-spacing:0.10px;">Add line</div>
<div class="t" style="left:145px;top:340px;font-size:12px;color:#1a1a1a;letter-spacing:-0.48px;">Remove</div>
<div class="t" style="left:236px;top:340px;font-size:12px;color:#8d8d8d;letter-spacing:0.04px;">Distribute amounts</div>
<div class="t" style="left:50px;top:364px;font-size:11px;color:#000;letter-spacing:-0.17px;">Description</div>
<div class="t" style="left:261px;top:364px;font-size:11px;color:#000;letter-spacing:-0.19px;">Main account</div>
<div class="t" style="left:336px;top:364px;font-size:11px;color:#000;letter-spacing:-0.05px;">Sales tax group</div>
<div class="t" style="left:423px;top:364px;font-size:11px;color:#000;letter-spacing:0.05px;">Item sales tax group</div>
<div class="t" style="left:535px;top:364px;font-size:11px;color:#000;letter-spacing:0.12px;">Quantity</div>
<div class="t" style="left:588px;top:364px;font-size:11px;color:#000;">Unit price</div>
<div class="t" style="left:675px;top:364px;font-size:11px;color:#000;letter-spacing:-0.20px;">Amount</div>
<div class="t" style="left:261px;top:381px;font-size:11px;color:#fff;letter-spacing:0.16px;">411400</div>
<div class="t" style="left:336px;top:381px;font-size:11px;color:#fff;letter-spacing:-0.50px;">OH</div>
<div class="t" style="left:555px;top:381px;font-size:11px;color:#fff;letter-spacing:0.03px;">1.00</div>
<div class="t" style="left:689px;top:381px;font-size:11px;color:#fff;letter-spacing:0.29px;">0.00</div>
<div class="t" style="left:26px;top:487px;font-size:13px;color:#000;letter-spacing:-0.16px;font-weight:bold;">Line details</div>
<div class="t" style="left:10px;top:516px;font-size:11px;color:#222;letter-spacing:0.09px;">Project ID:</div>
<div class="t" style="left:98px;top:516px;font-size:11px;color:#000;letter-spacing:-0.07px;">10004</div>
<div class="t" style="left:10px;top:540px;font-size:11px;color:#222;letter-spacing:-0.13px;">Category:</div>
<div class="t" style="left:98px;top:540px;font-size:11px;color:#fff;letter-spacing:-0.17px;">Consult</div>
<div class="t" style="left:10px;top:564px;font-size:11px;color:#222;letter-spacing:-0.12px;">Funding source:</div>
<div class="t" style="left:98px;top:564px;font-size:11px;color:#000;letter-spacing:0.08px;">110304</div>
<div class="t" style="left:207px;top:564px;font-size:11px;color:#000;">2124</div>
<div class="t" style="left:45px;top:614px;font-size:11px;color:#000;letter-spacing:-0.14px;">General</div>
<div class="t" style="left:102px;top:614px;font-size:11px;color:#000;letter-spacing:-0.44px;">Reasons</div>
<div class="t" style="left:162px;top:614px;font-size:11px;color:#000;letter-spacing:0.03px;">Foreign trade</div>
<div class="t" style="left:247px;top:614px;font-size:11px;color:#000;letter-spacing:-0.09px;">Financial dimensions line</div>
<div class="t" style="left:387px;top:614px;font-size:11px;color:#000;letter-spacing:0.05px;">Project</div>
<!-- /FTEXT -->
<!-- red arrows -->
<svg class="abs" style="left:0;top:450px" width="30" height="40" viewBox="0 450 30 40"><path d="M9.600 455.600 L17 477" stroke="#fb0a0a" stroke-width="1.800" fill="none"/><path d="M20.400 486.800 L13.100 477.500 L20.800 475.200 Z" fill="#fb0a0a"/></svg>
<svg class="abs" style="left:420px;top:580px" width="40" height="40" viewBox="420 580 40 40"><path d="M449.200 588.600 L434.600 606" stroke="#fb0a0a" stroke-width="1.800" fill="none"/><path d="M427.500 614.200 L431.900 603 L438 608.500 Z" fill="#fb0a0a"/></svg>
<div class="abs" style="left:3px;top:138px;width:955px;height:3px;background:linear-gradient(#cfd6df,#e3eaf3 60%,#eef6fe)"></div>
<!-- left frame -->
<div class="abs" style="left:0;top:138px;width:3px;height:512px;background:#d4d0c8"></div>
<div class="abs" style="left:0;top:0;width:1px;height:650px;background:#f7f6f3"></div>
</div>
</body></html>
